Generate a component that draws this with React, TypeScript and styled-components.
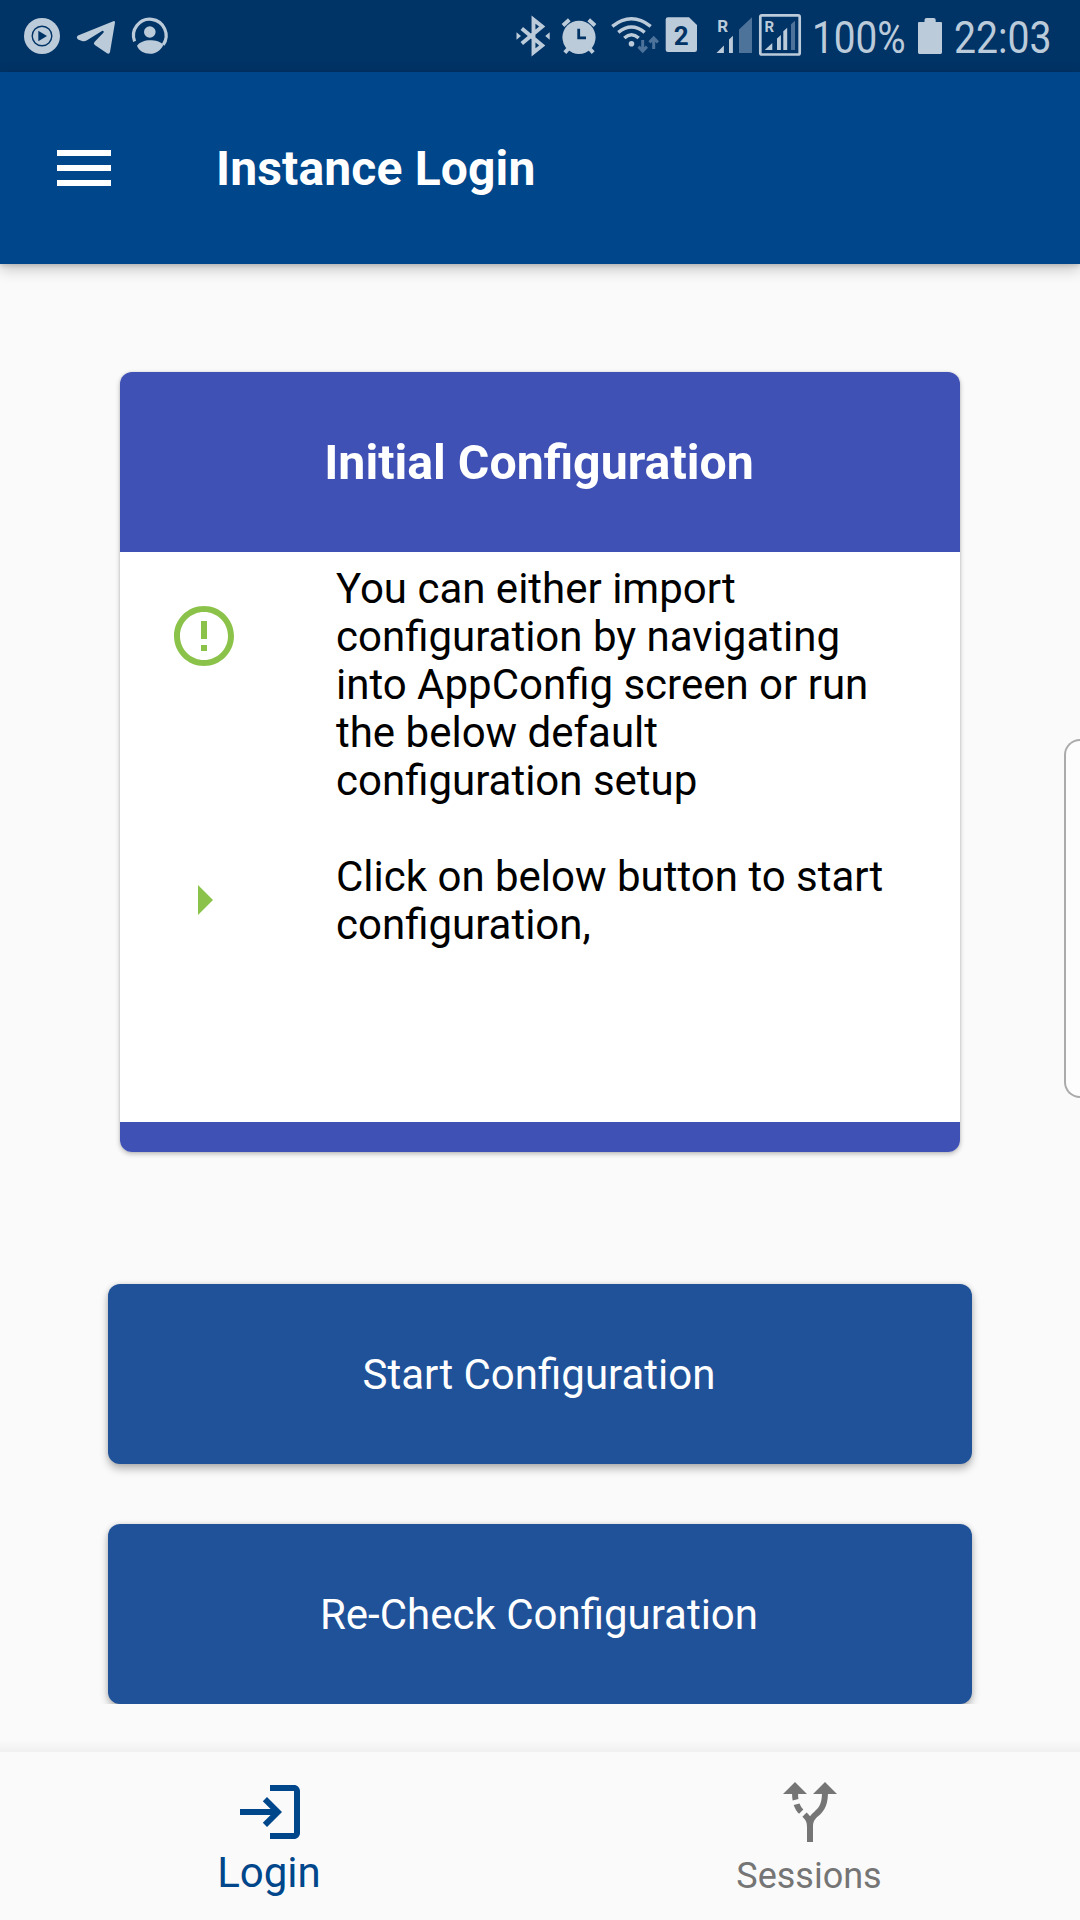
import React from "react";
import styled, { createGlobalStyle } from "styled-components";

const colors = {
  statusBg: "#003366",
  statusFg: "#bccbda",
  statusDim: "#4d739b",
  primary: "#00468b",
  button: "#205299",
  indigo: "#3f51b5",
  green: "#8bc34a",
  page: "#fafafa",
  muted: "#757575",
};

const GlobalStyle = createGlobalStyle`
  *, *::before, *::after { box-sizing: border-box; }
  body {
    margin: 0;
    background: ${colors.page};
    font-family: Roboto, "Noto Sans", sans-serif;
  }
`;

const Screen = styled.div`
  position: relative;
  display: flex;
  flex-direction: column;
  width: 1080px;
  height: 1920px;
  overflow: hidden;
  background: ${colors.page};
`;

const StatusBar = styled.div`
  display: flex;
  flex: none;
  height: 72px;
  padding-left: 16px;
  background: ${colors.statusBg};
  color: ${colors.statusFg};
`;

const StatusSpacer = styled.div`
  flex: 1;
`;

const StatusGlyph = styled.svg`
  display: block;
  flex: none;
  fill: ${colors.statusFg};
  font-family: Roboto, sans-serif;
  font-weight: 700;
`;

const StatusText = styled.div<{ $width: number; $scale: number }>`
  flex: none;
  width: ${(p) => p.$width}px;
  line-height: 76px;
  font-size: 45px;
  white-space: nowrap;
  transform: scaleX(${(p) => p.$scale});
  transform-origin: left center;
`;

const Header = styled.header`
  z-index: 1;
  display: flex;
  flex: none;
  align-items: flex-start;
  height: 192px;
  padding: 60px 48px 0;
  background: ${colors.primary};
  color: #fff;
  box-shadow: 0 5px 14px rgba(0, 0, 0, 0.22), 0 2px 4px rgba(0, 0, 0, 0.12);
`;

const Title = styled.h1`
  margin: 0 0 0 96px;
  line-height: 74px;
  font-size: 48px;
  font-weight: 700;
  letter-spacing: 0.15px;
  font-variant-ligatures: common-ligatures;
`;

const Icon = styled.svg`
  display: block;
  flex: none;
  width: 72px;
  height: 72px;
  fill: currentColor;
`;

const Content = styled.main`
  display: flex;
  flex-direction: column;
  flex: none;
  height: 1440px;
  padding: 108px 108px 0;
  overflow: hidden;
`;

const Card = styled.section`
  display: flex;
  flex-direction: column;
  height: 780px;
  margin: 0 12px 132px;
  border-radius: 12px;
  overflow: hidden;
  background: #fff;
  box-shadow: 0 2px 5px rgba(0, 0, 0, 0.26), 0 0 2px rgba(0, 0, 0, 0.12);
`;

const CardHeader = styled.h2`
  display: flex;
  align-items: center;
  justify-content: center;
  height: 180px;
  margin: 0;
  padding-right: 2px;
  background: ${colors.indigo};
  color: #fff;
  font-size: 48.25px;
  font-weight: 700;
`;

const CardBody = styled.div`
  flex: 1;
  padding: 12px 60px 0 48px;
`;

const CardFooter = styled.div`
  height: 30px;
  background: ${colors.indigo};
`;

const Step = styled.div<{ $iconTop: number }>`
  display: flex;
  gap: 96px;
  margin-bottom: 47px;
  color: #000;

  ${Icon} {
    margin-top: ${(p) => p.$iconTop}px;
    color: ${colors.green};
  }
`;

const StepText = styled.p`
  flex: 1;
  margin: 0;
  padding-top: 1px;
  line-height: 48px;
  font-size: 42px;
`;

const Actions = styled.div`
  display: flex;
  flex-direction: column;
  gap: 60px;
`;

const ActionButton = styled.button`
  height: 180px;
  padding: 0 2px 0 0;
  border: 0;
  border-radius: 12px;
  background: ${colors.button};
  color: #fff;
  font: 400 42px Roboto, sans-serif;
  box-shadow: 0 5px 9px rgba(0, 0, 0, 0.27), 0 0 5px rgba(0, 0, 0, 0.12);
`;

const NavShadow = styled.div`
  flex: none;
  height: 12px;
  margin-top: 36px;
  background: linear-gradient(rgba(0, 0, 0, 0), rgba(0, 0, 0, 0.04));
`;

const BottomNav = styled.nav`
  display: flex;
  flex: 1;
`;

const Tab = styled.a<{ $active?: boolean }>`
  display: flex;
  flex: 1;
  flex-direction: column;
  align-items: center;
  padding-top: 24px;
  color: ${(p) => (p.$active ? colors.primary : colors.muted)};
`;

const TabLabel = styled.span<{ $size: number; $top: number }>`
  margin-top: ${(p) => p.$top}px;
  padding-right: 2px;
  line-height: 48px;
  font-size: ${(p) => p.$size}px;
`;

const EdgeHandle = styled.div`
  position: absolute;
  top: 739px;
  right: 0;
  width: 16px;
  height: 359px;
  border: 2px solid #ababab;
  border-right: 0;
  border-radius: 19px 0 0 19px;
  background: #fdfdfd;
`;

type GlyphProps = { x: number; w: number; children: React.ReactNode };

const Glyph = ({ x, w, children }: GlyphProps) => (
  <StatusGlyph width={w} height={72} viewBox={`${x} 0 ${w} 72`}>
    {children}
  </StatusGlyph>
);

const line = { fill: "none", stroke: colors.statusFg };

const Notifications = () => (
  <>
    <Glyph x={16} w={52}>
      <circle cx="42" cy="36" r="18" />
      <circle cx="42" cy="36" r="9.8" fill="none" stroke={colors.statusBg} strokeWidth="1.4" />
      <path d="M38.3 30.7 47 36l-8.7 5.3z" fill={colors.statusBg} />
    </Glyph>
    <Glyph x={68} w={56}>
      <path d="M78 35.6 113.3 21.2Q115.2 20.7 115 22.6L110 52Q109.4 54.6 107 53.2L94.8 45Q93 43.6 94.5 42L103.6 32.4Q104.2 30.4 102 31L87 40.3Q84.6 41.6 82 40.9L78 39.4Q75.6 37.4 78 35.6z" />
    </Glyph>
    <Glyph x={124} w={52}>
      <path d="M134.6 41.4A16.3 16.3 0 1 1 163.2 44.8" {...line} strokeWidth="3.2" />
      <circle cx="149.8" cy="32" r="5.8" />
      <path d="M137 45.8c2.6-3.8 7.6-5.6 13-5.6s10.6 1.4 13.4 4.8C160.5 50.5 155.8 53.8 150 53.8S138.8 51 137 45.8z" />
    </Glyph>
  </>
);

const SystemIcons = () => (
  <>
    <Glyph x={510} w={46}>
      <path d="M521.8 28.5 542.2 45.5 533.5 52.4V19.6L542.2 26.5 521.8 43.5" {...line} strokeWidth="3.9" />
      <path d="M516.5 32.3 521 36l-4.500 3.700zM549.700 32.300 545.200 36l4.500 3.700z" />
    </Glyph>
    <Glyph x={556} w={48}>
      <circle cx="579" cy="37.3" r="16.6" />
      <path d="M563 25.4 569.3 19.7M588.7 19.7 595 25.4" {...line} strokeWidth="4" />
      <path d="M569 48 564.8 52.7M589 48 593.2 52.7" {...line} strokeWidth="4" />
      <path d="M578.7 28.7V37.8H586" fill="none" stroke={colors.statusBg} strokeWidth="2.8" />
    </Glyph>
    <Glyph x={604} w={56}>
      <path d="M612.3 26.3Q631.5 11.300 650.700 26.300M618.300 32.300Q631.500 21.600 644.700 32.300M624.300 38Q631.500 31.600 638.700 38" {...line} strokeWidth="3.5" />
      <circle cx="631.5" cy="43.7" r="2.8" />
      <path d="M642.7 40V51M638.5 46.600 642.700 51 646.900 46.600M653.700 49V38M649.500 42.400 653.700 38 657.900 42.400" fill="none" stroke={colors.statusDim} strokeWidth="3" />
    </Glyph>
    <Glyph x={660} w={48}>
      <path d="M668 17.3H689L697 25V49.700Q697 52 694.700 52H668Q665.700 52 665.700 49.700V19.600Q665.700 17.300 668 17.300z" />
      <text x="681.2" y="45" fontSize="26" textAnchor="middle" fill={colors.statusBg}>2</text>
    </Glyph>
    <Glyph x={708} w={48}>
      <text x="717.3" y="32.3" fontSize="17">R</text>
      <path d="M716.5 53 723.9 45.500V53zM729 53V39.600L732.900 35.800V53z" />
      <path d="M739 53V29.5L752 17.3V53z" fill={colors.statusDim} />
    </Glyph>
    <Glyph x={756} w={56}>
      <rect x="760.3" y="15.3" width="39.4" height="39.2" rx="1.6" {...line} strokeWidth="2.7" />
      <text x="764.4" y="32.3" fontSize="15">R</text>
      <path d="M764.8 50 772.3 43V50zM777 50V38.500L780.900 35V50zM783.300 50V31.300L787.200 27.800V50z" />
      <path d="M791 50V24.3L795 20.8V50z" fill={colors.statusDim} />
    </Glyph>
    <StatusText $width={102} $scale={0.86}>100%</StatusText>
    <Glyph x={914} w={40}>
      <path d="M918 23Q918 22 919 22H924.5V20Q924.5 18 926.5 18H933.7Q935.7 18 935.7 20V22H941Q942 22 942 23V52.6Q942 54 940.6 54H919.4Q918 54 918 52.6z" />
    </Glyph>
    <StatusText $width={126} $scale={0.87}>22:03</StatusText>
  </>
);

export default function App() {
  return (
    <>
      <GlobalStyle />
      <Screen>
        <StatusBar>
          <Notifications />
          <StatusSpacer />
          <SystemIcons />
        </StatusBar>

        <Header>
          <Icon viewBox="0 0 24 24">
            <path d="M3 18h18v-2H3v2zm0-5h18v-2H3v2zm0-7v2h18V6H3z" />
          </Icon>
          <Title>Instance Login</Title>
        </Header>

        <Content>
          <Card>
            <CardHeader>Initial Configuration</CardHeader>
            <CardBody>
              <Step $iconTop={36}>
                <Icon viewBox="0 0 24 24">
                  <path d="M11 15h2v2h-2zm0-8h2v6h-2zm.99-5C6.47 2 2 6.48 2 12s4.47 10 9.99 10C17.52 22 22 17.52 22 12S17.52 2 11.99 2zM12 20c-4.42 0-8-3.58-8-8s3.58-8 8-8 8 3.58 8 8-3.58 8-8 8z" />
                </Icon>
                <StepText>
                  You can either import configuration by navigating into AppConfig screen or run the
                  below default configuration setup
                </StepText>
              </Step>
              <Step $iconTop={12}>
                <Icon viewBox="0 0 24 24">
                  <path d="M10 17l5-5-5-5z" />
                </Icon>
                <StepText>Click on below button to start configuration,</StepText>
              </Step>
            </CardBody>
            <CardFooter />
          </Card>

          <Actions>
            <ActionButton>Start Configuration</ActionButton>
            <ActionButton>Re-Check Configuration</ActionButton>
          </Actions>
        </Content>

        <NavShadow />
        <BottomNav>
          <Tab $active>
            <Icon viewBox="0 0 24 24">
              <path d="M11 7L9.6 8.4l2.6 2.6H2v2h10.2l-2.6 2.6L11 17l5-5-5-5zm9 12h-8v2h8c1.1 0 2-.9 2-2V5c0-1.1-.9-2-2-2h-8v2h8v14z" />
            </Icon>
            <TabLabel $size={42} $top={1}>Login</TabLabel>
          </Tab>
          <Tab>
            <Icon viewBox="0 0 24 24">
              <path d="M9.78 11.16l-1.42 1.42c-.68-.69-1.34-1.58-1.79-2.94l1.94-.49c.32.89.77 1.5 1.27 2.01zM11 6L7 2 3 6h3.02c.01.81.08 1.54.19 2.17l1.94-.49C8.08 7.2 8.03 6.63 8.02 6H11zm10 0l-4-4-4 4h2.99c-.1 3.68-1.28 4.75-2.54 5.88-.5.44-1.01.92-1.45 1.55-.34-.49-.73-.88-1.13-1.24L9.46 13.6c.93.85 1.54 1.54 1.54 3.4v5h2v-5c0-2.02.71-2.66 1.79-3.63 1.38-1.24 3.08-2.78 3.2-7.37H21z" />
            </Icon>
            <TabLabel $size={36} $top={4}>Sessions</TabLabel>
          </Tab>
        </BottomNav>
        <EdgeHandle />
      </Screen>
    </>
  );
}
